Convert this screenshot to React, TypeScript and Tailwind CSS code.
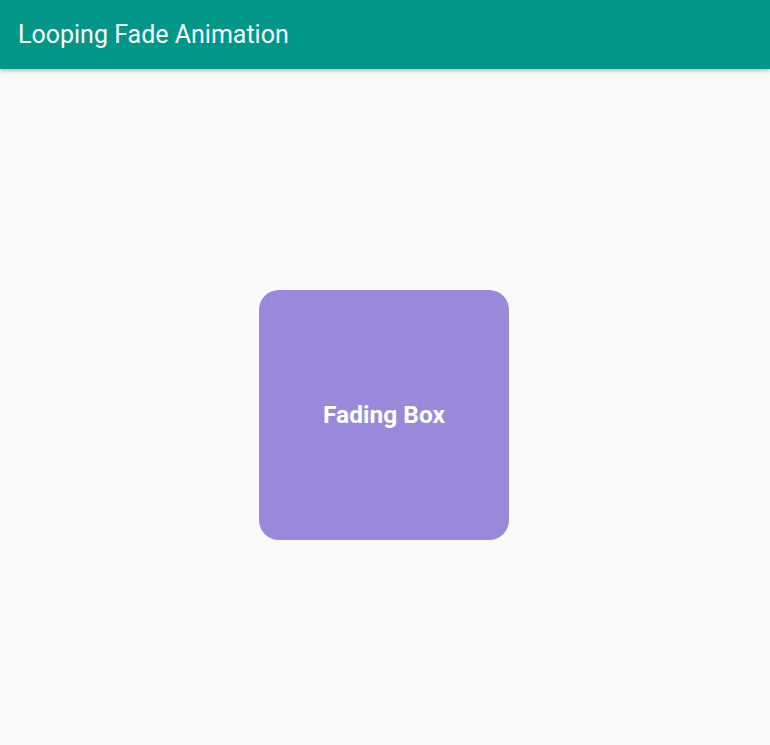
export default function App() {
  return (
    <div className="flex min-h-[745px] flex-col bg-[#fafafa] font-['Roboto',sans-serif]">
      <header className="relative z-10 flex h-[69px] items-center bg-[#009688] px-[18px] shadow-[0_2px_4px_rgba(0,0,0,0.25)]">
        <h1 className="text-[25px] font-normal text-white">Looping Fade Animation</h1>
      </header>

      <main className="flex flex-1 justify-center pr-[2px] pt-[221px]">
        <div className="flex h-[250px] w-[250px] items-center justify-center rounded-[20px] bg-[#9a89da]">
          <span className="text-[24.5px] font-bold text-white">Fading Box</span>
        </div>
      </main>
    </div>
  );
}
